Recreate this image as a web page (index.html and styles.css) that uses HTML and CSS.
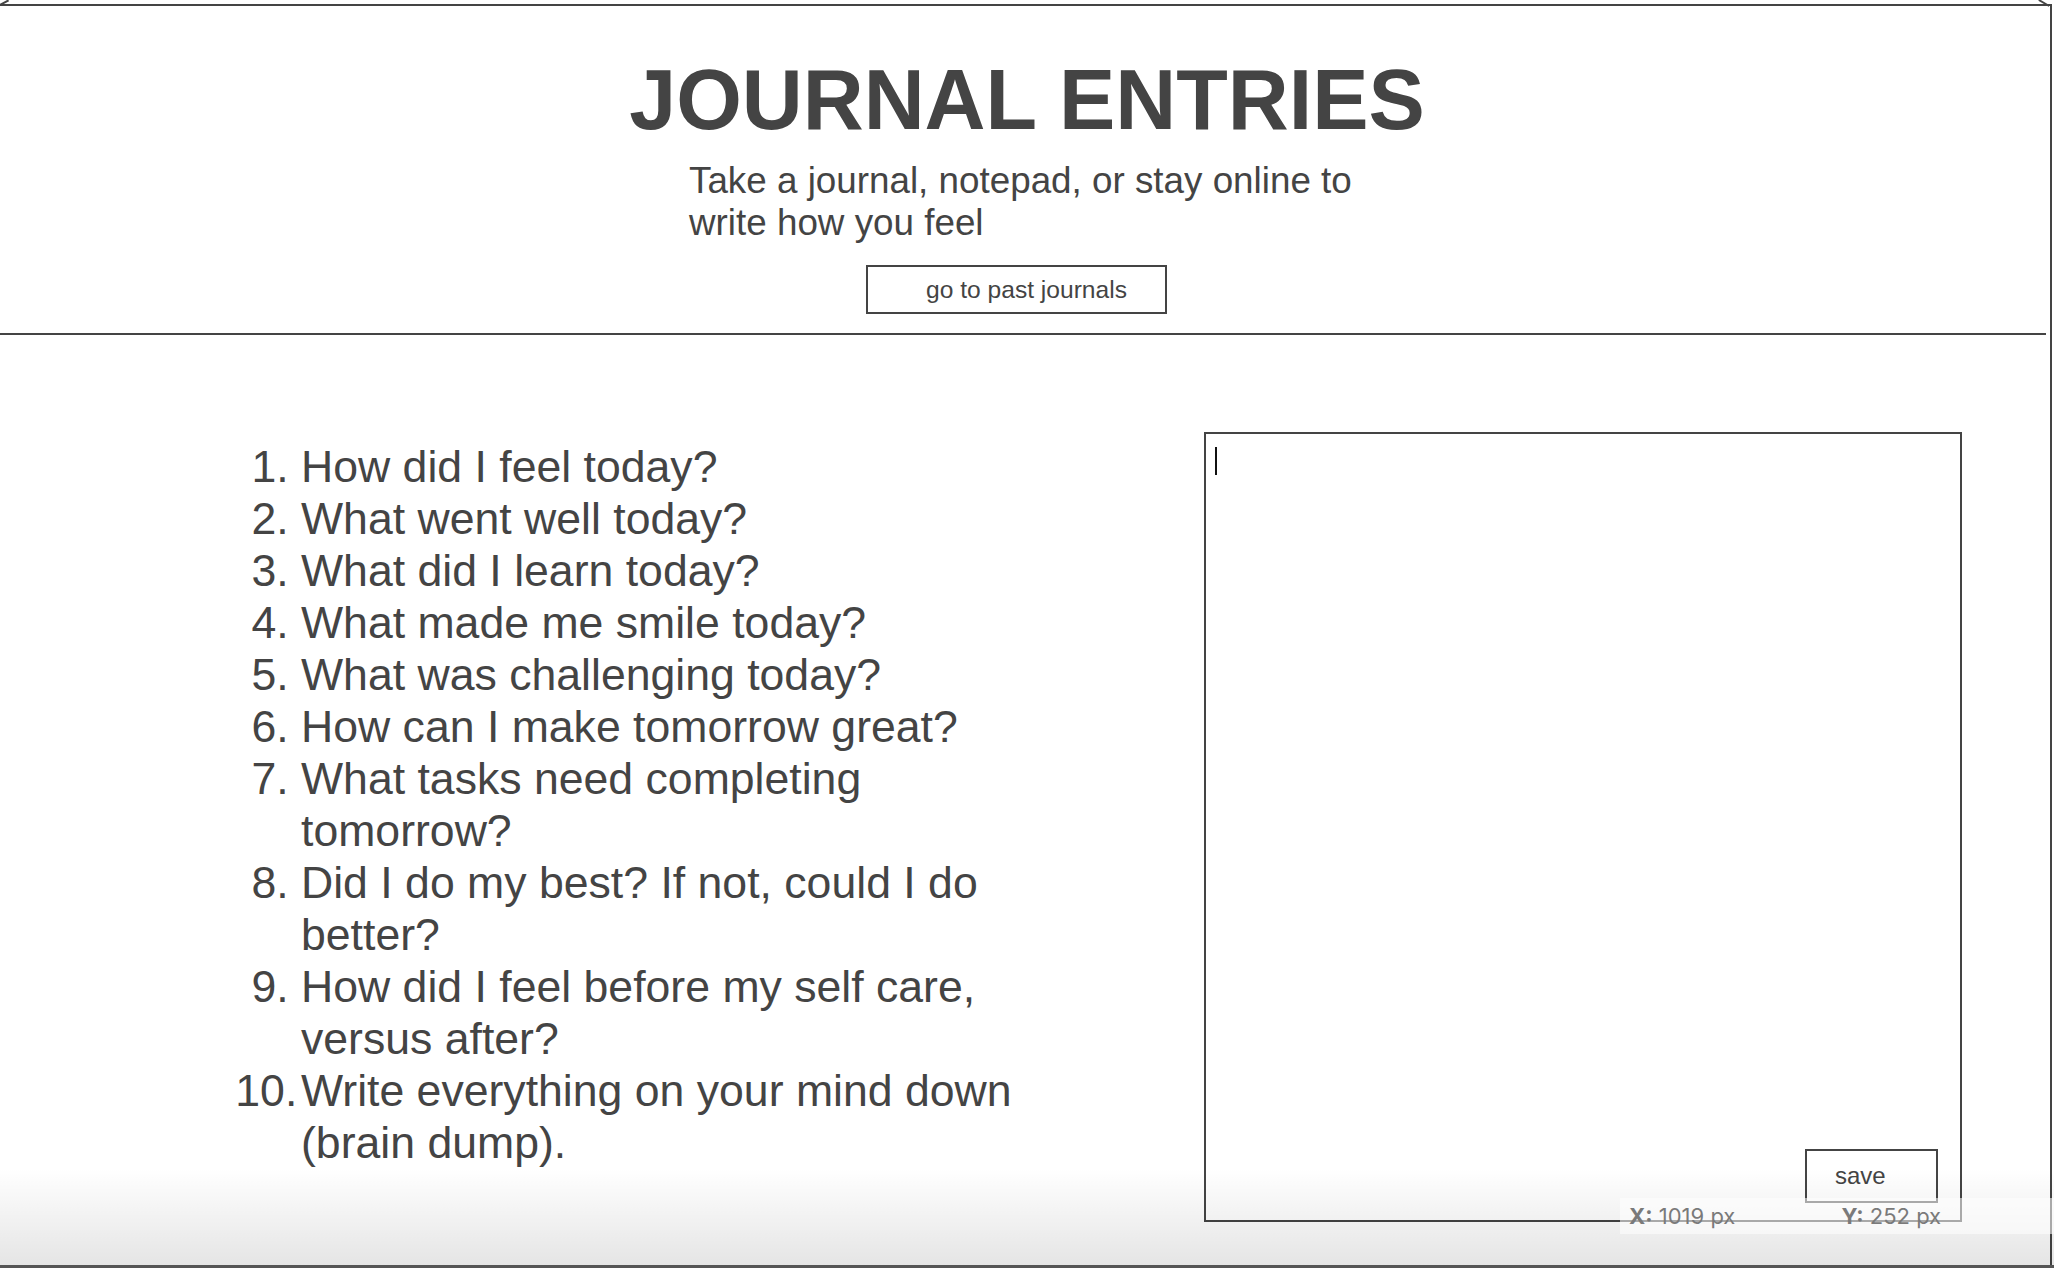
FILE: index.html
```html
<!DOCTYPE html>
<html lang="en">
<head>
<meta charset="utf-8">
<title>Journal Entries</title>
<link rel="stylesheet" href="styles.css">
</head>
<body>
<div class="page">
  <div class="window">
    <span class="corner corner-left"></span>
    <span class="corner corner-right"></span>
    <header class="header">
      <h1 class="title">JOURNAL ENTRIES</h1>
      <p class="subtitle">Take a journal, notepad, or stay online to write how you feel</p>
      <div class="header-actions">
        <button class="btn btn-past" type="button">go to past journals</button>
      </div>
    </header>
    <main class="content">
      <ol class="prompts">
        <li>How did I feel today?</li>
        <li>What went well today?</li>
        <li>What did I learn today?</li>
        <li>What made me smile today?</li>
        <li>What was challenging today?</li>
        <li>How can I make tomorrow great?</li>
        <li>What tasks need completing tomorrow?</li>
        <li>Did I do my best? If not, could I do better?</li>
        <li>How did I feel before my self care, versus after?</li>
        <li class="prompt-last">Write everything on your mind down (brain dump).</li>
      </ol>
      <div class="editor">
        <textarea class="editor-input" aria-label="Journal entry"></textarea>
        <span class="caret"></span>
        <button class="btn btn-save" type="button">save</button>
      </div>
    </main>
  </div>
  <div class="shade"></div>
  <div class="readout">
    <span class="readout-item"><b>X:</b> 1019 px</span>
    <span class="readout-item"><b>Y:</b> 252 px</span>
  </div>
</div>
</body>
</html>
```

FILE: styles.css
```css
html, body {
  margin: 0;
  padding: 0;
  background: #ffffff;
}

.page {
  position: relative;
  width: 2054px;
  height: 1268px;
  overflow: hidden;
  font-family: "Liberation Sans", Arial, sans-serif;
  color: #444444;
}

.window {
  position: relative;
  margin-top: 4px;
  width: 2052px;
  height: 1264px;
  box-sizing: border-box;
  border-top: 2px solid #444444;
  border-right: 2px solid #444444;
}

.corner {
  position: absolute;
  width: 12px;
  height: 2px;
  background: #444444;
}

.corner-left {
  left: -2px;
  top: -1px;
  transform: rotate(-28deg);
  transform-origin: left center;
}

.corner-right {
  right: 0;
  top: -4px;
  transform: rotate(30deg);
}

.header {
  margin-right: 4px;
  padding: 46px 0 19px 8px;
  border-bottom: 2px solid #444444;
  text-align: center;
}

.title {
  margin: 0;
  font-size: 84.4px;
  font-weight: bold;
  line-height: normal;
  color: #444444;
}

.subtitle {
  width: 676px;
  margin: 11px auto 0;
  font-size: 36.8px;
  line-height: 41.5px;
  text-align: left;
}

.header-actions {
  margin-top: 22px;
}

.btn {
  box-sizing: border-box;
  background: #ffffff;
  color: #444444;
  border: 2px solid #444444;
  border-radius: 0;
  font-family: "Liberation Sans", Arial, sans-serif;
  font-size: 24px;
  text-align: left;
  margin: 0;
}

.btn-past {
  display: inline-block;
  width: 301px;
  height: 49px;
  padding: 0 0 0 58px;
  margin-right: 21px;
  font-size: 24.6px;
  vertical-align: top;
}

.content {
  display: flex;
  align-items: flex-start;
  padding-top: 96.6px;
}

.prompts {
  flex: none;
  width: 740px;
  margin: 9px 0 0;
  padding: 0 0 0 301px;
  font-size: 44.6px;
  line-height: 52px;
}

.prompt-last::marker {
  content: "10.\200A";
}

.editor {
  position: relative;
  flex: none;
  width: 758px;
  height: 790px;
  margin-left: 163px;
}

.editor-input {
  display: block;
  width: 100%;
  height: 100%;
  box-sizing: border-box;
  margin: 0;
  padding: 12px;
  border: 2px solid #444444;
  border-radius: 0;
  resize: none;
  outline: none;
  background: #ffffff;
  font-family: "Liberation Sans", Arial, sans-serif;
  font-size: 24px;
}

.caret {
  position: absolute;
  left: 11px;
  top: 15px;
  width: 2px;
  height: 28px;
  background: #111111;
}

.btn-save {
  position: absolute;
  left: 601px;
  top: 717px;
  width: 133px;
  height: 54px;
  padding: 0 0 0 28px;
}

.shade {
  position: absolute;
  left: 0;
  right: 0;
  top: 1168px;
  height: 97px;
  background: linear-gradient(to bottom, rgba(0, 0, 0, 0) 0%, rgba(0, 0, 0, 0.1) 100%);
  border-bottom: 3px solid #555555;
  pointer-events: none;
}

.readout {
  position: absolute;
  left: 1620px;
  top: 1198px;
  width: 434px;
  height: 36px;
  box-sizing: border-box;
  padding-left: 9px;
  display: flex;
  align-items: center;
  background: rgba(255, 255, 255, 0.55);
  font-family: Inter, "Liberation Sans", sans-serif;
  font-size: 22px;
  color: #7a7a7a;
  pointer-events: none;
}

.readout-item {
  width: 214px;
  white-space: nowrap;
}

.readout-item b {
  font-weight: 700;
}
```
